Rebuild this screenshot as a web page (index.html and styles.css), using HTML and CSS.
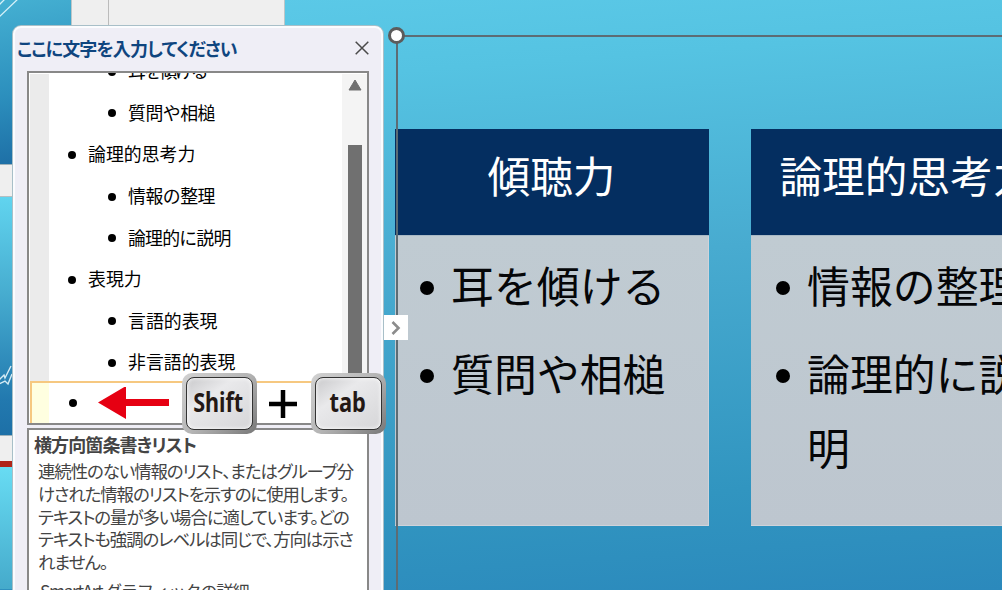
FILE: index.html
```
<!DOCTYPE html>
<html lang="ja">

<head>
  <meta charset="utf-8">
  <meta name="viewport" content="width=device-width">
  <title>SmartArt</title>
  <link rel="stylesheet" href="styles.css">
</head>

<body>
  <div class="screen">

    <!-- slide thumbnails behind the text pane -->
    <div class="thumbs">
      <div class="thumb first"></div>
      <div class="gap"></div>
      <div class="thumb second"></div>
      <div class="gap low"></div>
      <div class="thumb third"></div>
    </div>
    <svg class="streaks" width="71" height="400" viewBox="0 0 71 400">
      <path d="M-2 6L5 -1M-2 18L19 -2" stroke="#d5f1f8" stroke-width="1.3" fill="none"/>
      <path d="M-1 380L4 375L5 378L11 366M-1 384L5 381L8 384L12 374" stroke="#d5ecf5" stroke-width="1.4" fill="none"/>
    </svg>
    <div class="toolbar"><span></span></div>

    <!-- slide -->
    <div class="slide">
      <div class="card">
        <h2>傾聴力</h2>
        <ul>
          <li>耳を傾ける</li>
          <li>質問や相槌</li>
        </ul>
      </div>
      <div class="card">
        <h2>論理的思考力</h2>
        <ul>
          <li>情報の整理</li>
          <li>論理的に説明</li>
        </ul>
      </div>
    </div>
    <div class="frame"></div>
    <div class="handle"></div>

    <!-- text pane -->
    <div class="pane">
      <div class="pane-head">
        <span class="pane-title">ここに文字を入力してください</span>
        <svg width="14" height="14" viewBox="0 0 14 14">
          <path d="M0.7 0.7L13.3 13.3M13.3 0.7L0.7 13.3" stroke="#4a4a4a" stroke-width="1.5"/>
        </svg>
      </div>
      <div class="editor">
        <div class="gutter"></div>
        <ul class="outline">
          <li class="sub"><span class="t5k">耳を傾ける</span></li>
          <li class="sub"><span class="t5">質問や相槌</span></li>
          <li><span>論理的思考力</span></li>
          <li class="sub"><span class="t5">情報の整理</span></li>
          <li class="sub"><span class="t6">論理的に説明</span></li>
          <li><span>表現力</span></li>
          <li class="sub"><span>言語的表現</span></li>
          <li class="sub"><span>非言語的表現</span></li>
        </ul>
        <div class="scroll">
          <svg width="14" height="12" viewBox="0 0 14 12">
            <path d="M7 1L13 11H1Z" fill="#707070" stroke="#707070" stroke-linejoin="round"/>
          </svg>
          <div class="bar"></div>
        </div>
        <div class="active"></div>
      </div>
      <div class="about">
        <h3>横方向箇条書きリスト</h3>
        <p>
          <span>連続性のない情報のリスト、またはグループ分</span>
          <span>けされた情報のリストを示すのに使用します。</span>
          <span>テキストの量が多い場合に適しています。どの</span>
          <span>テキストも強調のレベルは同じで、方向は示さ</span>
          <span>れません。</span>
        </p>
        <div class="more">SmartArt グラフィックの詳細</div>
      </div>
    </div>
    <div class="toggle">
      <svg width="12" height="16" viewBox="0 0 12 16">
        <path d="M2.5 2L8.5 8L2.5 14" stroke="#8c8c8c" stroke-width="2.6" fill="none"/>
      </svg>
    </div>

    <!-- shortcut hint -->
    <div class="hint">
      <svg class="arrow" width="72" height="34" viewBox="0 0 72 34">
        <path d="M0 15.5L28 -1V12H71V19H28V32Z" fill="#e60012"/>
      </svg>
      <div class="key"><div><span class="shift">Shift</span></div></div>
      <svg class="plus" width="28" height="28" viewBox="0 0 28 28">
        <path d="M14 0V28M0 14H28" stroke="#000" stroke-width="4.5"/>
      </svg>
      <div class="key"><div><span class="tab">tab</span></div></div>
    </div>

  </div>
</body>
</html>
```
FILE: styles.css
```
body {
  font-family: "Noto Sans CJK JP", sans-serif;
  margin: 0;
}

h2, h3, p, ul {
  font-weight: normal;
  margin: 0;
  padding: 0;
}

ul {
  list-style: none;
}

.screen {
  background: linear-gradient(176deg, #5ccae8 0%, #55c3e2 15%, #48abd0 45%, #3195c0 82%, #2b89bc 100%);
  height: 590px;
  overflow: hidden;
  position: relative;
  width: 1002px;
}

.thumbs {
  height: 590px;
  left: 0;
  position: absolute;
  top: 0;
  width: 71px;
}

.thumb.first {
  background: linear-gradient(170deg, #45b0d2, #2c8fbd 55%, #1c6ba3);
  height: 164px;
}

.thumb.second {
  background: linear-gradient(#61d4ef, #47add0 40%, #2279af 85%, #1d70a7);
  height: 238px;
}

.thumb.third {
  background: linear-gradient(#68dcf3, #45aacb);
  border-top: 6px solid #b02418;
  height: 122px;
}

.gap {
  background: #efefef;
  border-bottom: 1px solid #b5bfc2;
  border-top: 1px solid #9fb2ba;
  height: 31px;
}

.gap.low {
  border-bottom: 0;
  height: 25px;
}

.streaks {
  left: 0;
  position: absolute;
  top: 0;
}

.toolbar {
  background: #efefef;
  border: solid #bcc6c8;
  border-width: 0 1px;
  height: 27px;
  left: 71px;
  position: absolute;
  top: 0;
  width: 212px;
}

.toolbar span {
  border-right: 1px solid #bbb;
  display: block;
  height: 27px;
  width: 36px;
}

/* slide */
.slide {
  display: flex;
  gap: 42px;
  padding: 129px 0 0 395px;
  width: 680px;
}

.card {
  flex: none;
  width: 314px;
}

.card h2 {
  background: #042e60;
  color: #fff;
  font-size: 42.7px;
  height: 106px;
  line-height: 90px;
  text-align: center;
  text-indent: -1px;
  white-space: nowrap;
}

.card ul {
  background: linear-gradient(#c0cbd2, #bdc6cf);
  border-top: 1px solid #a9b9c5;
  box-shadow: inset -1px -1px #cfd3da;
  box-sizing: border-box;
  height: 291px;
  padding: 11px 15px 0 25px;
}

.card li {
  color: #050608;
  display: flex;
  font-size: 42.9px;
  line-height: 74px;
  margin-bottom: 14px;
}

.card li::before {
  background: #000;
  border-radius: 50%;
  content: "";
  flex: none;
  height: 14px;
  margin: 34px 17px 0 0;
  width: 14px;
}

.frame {
  border: solid #5d6c74;
  border-width: 2px 0 0 2px;
  height: 560px;
  left: 396px;
  position: absolute;
  top: 35px;
  width: 620px;
}

.handle {
  background: #fff;
  border: 3px solid #5c5c5c;
  border-radius: 50%;
  box-sizing: border-box;
  height: 17px;
  left: 388px;
  position: absolute;
  top: 27px;
  width: 17px;
}

/* text pane */
.pane {
  background: #efeef6;
  border: 2px solid #fbfcfe;
  border-radius: 8px 8px 0 0;
  box-shadow: 0 0 0 1px #a8bfc8;
  box-sizing: border-box;
  display: flex;
  flex-direction: column;
  height: 600px;
  left: 13px;
  padding: 0 12px;
  position: absolute;
  top: 26px;
  width: 370px;
}

.pane-head {
  align-items: center;
  display: flex;
  flex: none;
  height: 43px;
  justify-content: space-between;
  margin-left: -10px;
}

.pane-head svg {
  margin-top: -3px;
}

.pane-title {
  color: #0f457f;
  font-feature-settings: "palt";
  font-size: 18px;
  font-weight: bold;
  letter-spacing: -0.85px;
  line-height: 24px;
  margin-top: -3px;
  white-space: nowrap;
}

.editor {
  background: #fff;
  border: 2px solid #888;
  box-sizing: border-box;
  display: flex;
  flex: none;
  height: 354px;
  overflow: hidden;
  padding: 1px 1px 0;
  position: relative;
}

.gutter {
  background: #ebebeb;
  flex: none;
  width: 19px;
}

.outline {
  flex: 1;
  margin-top: -23px;
}

.outline li {
  align-items: center;
  color: #000;
  display: flex;
  font-size: 17.9px;
  height: 41.6px;
  padding-left: 19px;
  white-space: nowrap;
}

.outline li::before {
  background: #000;
  border-radius: 50%;
  content: "";
  height: 8px;
  margin-right: 12px;
  width: 8px;
}

.outline span {
  margin-bottom: 3px;
}

.outline .sub {
  padding-left: 59px;
}

.outline .t5 {
  letter-spacing: -0.5px;
}

.outline .t6 {
  letter-spacing: -0.8px;
}

.outline .t5k {
  letter-spacing: -2.2px;
}

.scroll {
  align-items: center;
  background: #f4f4f4;
  display: flex;
  flex-direction: column;
  margin-right: -1px;
  width: 25px;
}

.scroll svg {
  margin-top: 5px;
}

.bar {
  background: #707070;
  height: 240px;
  margin-top: 54px;
  width: 14px;
}

.active {
  background: linear-gradient(90deg, #ffffe0 17px, #fff 17px);
  border: 2px solid #f6c880;
  border-bottom: 0;
  bottom: 0;
  box-sizing: border-box;
  height: 42px;
  left: 1px;
  position: absolute;
  right: 1px;
}

.active::after {
  background: #000;
  border-radius: 50%;
  content: "";
  display: block;
  height: 8px;
  margin: 16px 0 0 37px;
  width: 8px;
}

.about {
  background: #fff;
  border: 2px solid #888;
  box-sizing: border-box;
  color: #444;
  flex: none;
  height: 200px;
  margin-top: 3px;
  padding: 3px 6px;
}

.about h3 {
  font-feature-settings: "palt";
  font-size: 18px;
  font-weight: bold;
  letter-spacing: -0.9px;
  line-height: 23px;
  margin-left: -1px;
  white-space: nowrap;
}

.about p {
  font-feature-settings: "palt";
  font-size: 17.4px;
  line-height: 22.8px;
  margin: 4px 0 0 3px;
}

.about p span {
  display: block;
  letter-spacing: -1.05px;
  white-space: nowrap;
}

.about .more {
  font-size: 17.4px;
  letter-spacing: -1.4px;
  line-height: 24px;
  margin: 5px 0 0 5px;
  white-space: nowrap;
}

.toggle {
  align-items: center;
  background: #fff;
  box-sizing: border-box;
  display: flex;
  height: 25px;
  justify-content: center;
  left: 384px;
  position: absolute;
  top: 315px;
  width: 24px;
}

/* shortcut hint */
.hint {
  align-items: center;
  display: flex;
  left: 98px;
  position: absolute;
  top: 373px;
}

.key {
  background: linear-gradient(135deg, #d2d2d2, #b5b5b5 50%, #777);
  border-radius: 10px;
  box-sizing: border-box;
  height: 61px;
  padding: 4px;
  width: 75px;
}

.key div {
  align-items: center;
  background: linear-gradient(145deg, #c9c9cb, #e9e9eb 35%, #d6d6d8);
  border: 1px solid #333;
  border-radius: 8px;
  box-shadow: inset 0 0 4px #fff;
  box-sizing: border-box;
  color: #231815;
  display: flex;
  font-family: "Noto Sans", sans-serif;
  font-size: 26px;
  font-weight: bold;
  height: 53px;
  justify-content: center;
  padding: 0 2px 3px 0;
}

.key .shift {
  transform: scaleX(0.83);
}

.key .tab {
  transform: scaleX(0.84);
}

.arrow {
  margin-right: 12px;
}

.plus {
  margin: 0 14px 0 12px;
}
```
